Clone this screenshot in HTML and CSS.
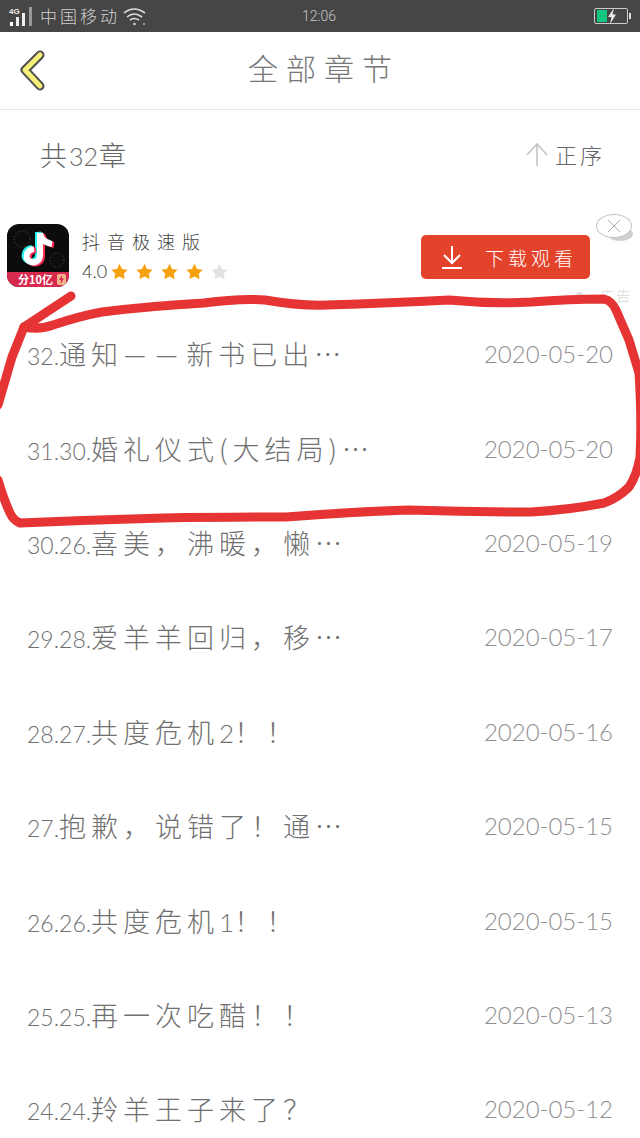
FILE: index.html
```html
<!DOCTYPE html>
<html lang="zh">

<head>
    <meta charset="UTF-8">
    <title>全部章节</title>
    <link rel="stylesheet" href="styles.css">
</head>

<body>
    <div class="page">
        <div class="status">
            <div class="status-left">
                <span class="net">4G</span>
                <svg class="signal" width="30" height="22" viewBox="0 0 30 22">
                    <rect x="0" y="17" width="3" height="4" fill="#fff" />
                    <rect x="6" y="12" width="3" height="9" fill="#eee" />
                    <rect x="12" y="8" width="3" height="13" fill="#eee" />
                    <rect x="19" y="2" width="3" height="19" fill="#999" />
                </svg>
                <span class="carrier">中国移动</span>
                <svg class="wifi" width="24" height="20" viewBox="0 0 24 20" fill="none" stroke="#ddd" stroke-width="1.6">
                    <path d="M1 7Q11 -1 22 7" />
                    <path d="M4 11Q11 5 19 11" />
                    <path d="M7 14Q11 11 16 14" />
                    <circle cx="11.5" cy="18" r="1.2" fill="#ddd" stroke="none" />
                    <circle cx="21" cy="18" r="1" fill="#bbb" stroke="none" />
                </svg>
            </div>
            <span class="clock">12:06</span>
            <div class="battery">
                <span class="battery-level"></span>
                <svg class="bolt" width="10" height="16" viewBox="0 0 10 16">
                    <path d="M7 0L1 9H4.500L3 16L9 6.500H5.500Z" fill="#eee" />
                </svg>
            </div>
        </div>

        <header class="top">
            <svg class="back" width="34" height="50" viewBox="0 0 34 50" fill="none" stroke-linecap="round" stroke-linejoin="round">
                <path d="M25 10L10 25L25 41" stroke="#4f4f4f" stroke-width="9" />
                <path d="M25 10L10 25L25 41" stroke="#f6f07a" stroke-width="5" />
            </svg>
            <h1>全部章节</h1>
        </header>

        <div class="sub">
            <span class="total">共<span class="num">32</span>章</span>
            <span class="order">
                <svg width="22" height="24" viewBox="0 0 22 24" fill="none" stroke="#c4c4c4" stroke-width="1.6">
                    <path d="M11 2V24M1 13L11 2L21 13" />
                </svg>
                正序
            </span>
        </div>

        <div class="ad">
            <div class="ad-icon">
                <svg width="62" height="48" viewBox="0 0 62 48" fill="none" stroke-width="6">
                    <circle cx="15" cy="15" r="8" stroke="#5a5a3a" stroke-width="1" stroke-dasharray="1 2" />
                    <circle cx="50" cy="36" r="7" stroke="#5a5a3a" stroke-width="1" stroke-dasharray="1 2" />
                    <path d="M33 9V31C33 38 26 40 22 37C18 34 19 26 27 25" stroke="#25f4ee" transform="translate(-2 -1)" />
                    <path d="M33 9C34 15 38 19 45 20" stroke="#fe2c55" transform="translate(2 1)" />
                    <path d="M33 9V31C33 38 26 40 22 37C18 34 19 26 27 25" stroke="#fe2c55" transform="translate(2 1)" />
                    <path d="M33 9C34 15 38 19 45 20" stroke="#25f4ee" transform="translate(-2 -1)" />
                    <path d="M33 9V31C33 38 26 40 22 37C18 34 19 26 27 25M33 9C34 15 38 19 45 20" stroke="#fff" />
                </svg>
                <span class="ad-badge">分10亿</span>
                <svg class="ad-flash" width="9" height="11" viewBox="0 0 9 11">
                    <rect width="9" height="11" rx="2" fill="#f2b48c" />
                    <path d="M5 1L2 6H4L3.500 10L7 4.500H5Z" fill="#d8294f" />
                </svg>
            </div>
            <div class="ad-info">
                <div class="ad-name">抖音极速版</div>
                <div class="ad-rate">
                    <span class="score">4.0</span>
                    <svg class="star" viewBox="0 0 20 20"><path d="M10 1L13 7L19.500 8L15 12.500L16 19L10 16L4 19L5 12.500L.5 8L7 7Z" /></svg>
                    <svg class="star" viewBox="0 0 20 20"><path d="M10 1L13 7L19.500 8L15 12.500L16 19L10 16L4 19L5 12.500L.5 8L7 7Z" /></svg>
                    <svg class="star" viewBox="0 0 20 20"><path d="M10 1L13 7L19.500 8L15 12.500L16 19L10 16L4 19L5 12.500L.5 8L7 7Z" /></svg>
                    <svg class="star" viewBox="0 0 20 20"><path d="M10 1L13 7L19.500 8L15 12.500L16 19L10 16L4 19L5 12.500L.5 8L7 7Z" /></svg>
                    <svg class="star off" viewBox="0 0 20 20"><path d="M10 1L13 7L19.500 8L15 12.500L16 19L10 16L4 19L5 12.500L.5 8L7 7Z" /></svg>
                </div>
            </div>
            <div class="ad-btn">
                <svg width="22" height="24" viewBox="0 0 22 24" fill="none" stroke="#fff" stroke-width="2">
                    <path d="M11 1V17M3 10L11 18L19 10M1 23H21" />
                </svg>
                <span>下载观看</span>
            </div>
            <div class="ad-close">
                <svg width="14" height="14" viewBox="0 0 14 14" stroke="#aaa" stroke-width="1">
                    <path d="M1 1L13 13M13 1L1 13" />
                </svg>
            </div>
            <span class="ad-dot"></span>
            <div class="ad-tag">广告</div>
        </div>

        <ul class="chapters">
            <li><span class="title"><span class="num">32.</span>通知<span class="dash">——</span>新书已出…</span><span class="date">2020-05-20</span></li>
            <li><span class="title"><span class="num">31.30.</span>婚礼仪式(大结局)…</span><span class="date">2020-05-20</span></li>
            <li><span class="title"><span class="num">30.26.</span>喜美，沸暖，懒…</span><span class="date">2020-05-19</span></li>
            <li><span class="title"><span class="num">29.28.</span>爱羊羊回归，移…</span><span class="date">2020-05-17</span></li>
            <li><span class="title"><span class="num">28.27.</span>共度危机<span class="digit">2</span>！！</span><span class="date">2020-05-16</span></li>
            <li><span class="title"><span class="num">27.</span>抱歉，说错了！通…</span><span class="date">2020-05-15</span></li>
            <li><span class="title"><span class="num">26.26.</span>共度危机<span class="digit">1</span>！！</span><span class="date">2020-05-15</span></li>
            <li><span class="title"><span class="num">25.25.</span>再一次吃醋！！</span><span class="date">2020-05-13</span></li>
            <li><span class="title"><span class="num">24.24.</span>羚羊王子来了？</span><span class="date">2020-05-12</span></li>
        </ul>

        <!-- red marker scribble on top of the screenshot -->
        <svg class="scribble" width="640" height="1138" viewBox="0 0 640 1138" fill="none" stroke="#e63333" stroke-width="9" stroke-linecap="round" stroke-linejoin="round">
            <path d="M71 296L24 327Q40 330 53 325Q80 316 102 312Q150 306 204 303Q240 298 265 300Q300 306 327 305Q390 303 449 300Q490 304 531 302Q570 299 604 299Q612 301 616 310L629 340L639 373Q642 420 640 457Q637 475 629 487Q618 498 604 503Q570 510 531 512Q470 512 408 510Q350 512 286 517Q220 517 163 518Q90 520 20 523Q13 520 10 513Q4 500 -2 480" />
            <path d="M24 327L12 357L-2 405" />
        </svg>
    </div>
</body>

</html>
```

FILE: styles.css
```css
* {
    box-sizing: border-box;
}

html,
body {
    margin: 0;
    padding: 0;
}

body {
    font-family: "Noto Sans CJK SC", sans-serif;
    font-weight: 300;
    background-color: #ffffff;
}

.page {
    position: relative;
    width: 640px;
    height: 1138px;
    overflow: hidden;
}

.status {
    display: flex;
    align-items: center;
    justify-content: space-between;
    height: 32px;
    padding: 0 10px;
    background-color: #464646;
    color: #cfcfcf;
}

.status-left {
    display: flex;
    align-items: center;
    width: 210px;
}

.net {
    position: absolute;
    left: 9px;
    top: 7px;
    font-family: "Liberation Sans", sans-serif;
    font-size: 8px;
    font-weight: 700;
    color: #eeeeee;
}

.carrier {
    font-size: 17px;
    letter-spacing: 3px;
    line-height: 32px;
}

.wifi {
    margin-left: 3px;
}

.clock {
    font-family: "Roboto", sans-serif;
    font-size: 14px;
    color: #c8c8c8;
    margin-right: 176px;
}

.battery {
    display: flex;
    align-items: center;
    position: relative;
    width: 34px;
    height: 16px;
    margin-right: 2px;
    padding: 1px 2px;
    border: 1px solid #cccccc;
    border-radius: 2px;
}

.battery::after {
    content: "";
    position: absolute;
    right: -4px;
    top: 4px;
    width: 2px;
    height: 6px;
    background-color: #dddddd;
}

.battery-level {
    width: 10px;
    height: 12px;
    background-color: #12c77f;
}

.top {
    display: flex;
    align-items: center;
    justify-content: center;
    position: relative;
    height: 78px;
    border-bottom: 1px solid #e6e6e6;
}

.back {
    position: absolute;
    left: 15px;
    top: 13px;
}

.top h1 {
    margin: 0 0 8px 8px;
    font-size: 30px;
    font-weight: 300;
    letter-spacing: 8px;
    color: #777777;
}

.sub {
    display: flex;
    align-items: center;
    justify-content: space-between;
    height: 92px;
    padding: 0 35px 4px 40px;
    color: #666666;
}

.total {
    font-size: 27px;
    letter-spacing: 1px;
}

.total .num {
    margin: 0 1px;
    font-size: 25px;
}

.order {
    display: flex;
    align-items: center;
    gap: 7px;
    font-size: 22px;
    letter-spacing: 3px;
}

.ad {
    display: flex;
    position: relative;
    height: 106px;
    padding: 22px 0 0 7px;
}

.ad-icon {
    position: relative;
    width: 62px;
    height: 63px;
    overflow: hidden;
    border-radius: 12px;
    background-color: #0c0c0c;
}

.ad-icon svg {
    display: block;
}

.ad-badge {
    position: absolute;
    left: 0;
    right: 0;
    bottom: 0;
    height: 15px;
    padding-left: 11px;
    background-color: #d8294f;
    color: #ffffff;
    font-size: 11px;
    font-weight: 700;
    line-height: 15px;
}

.ad-icon .ad-flash {
    position: absolute;
    right: 3px;
    bottom: 2px;
}

.ad-info {
    width: 352px;
    padding: 3px 0 0 13px;
}

.ad-name {
    font-size: 18px;
    letter-spacing: 7px;
    line-height: 28px;
    color: #444444;
}

.ad-rate {
    display: flex;
    align-items: center;
    margin-top: 5px;
}

.score {
    width: 29px;
    font-family: "Lato", sans-serif;
    font-size: 18px;
    font-weight: 300;
    color: #333333;
}

.star {
    width: 17px;
    height: 17px;
    margin-right: 8px;
    fill: #f7a10f;
}

.star.off {
    fill: #e2e2e2;
}

.ad-btn {
    display: flex;
    align-items: center;
    gap: 22px;
    width: 169px;
    height: 44px;
    margin-top: 11px;
    padding-left: 20px;
    border-radius: 5px;
    background-color: #e4432b;
    color: #ffffff;
    font-size: 19px;
    letter-spacing: 4px;
}

.ad-close {
    display: flex;
    align-items: center;
    justify-content: center;
    position: absolute;
    left: 596px;
    top: 12px;
    width: 36px;
    height: 24px;
    border: 1px solid #c4c4c4;
    border-radius: 50%;
    background-color: #ffffff;
    box-shadow: 6px 8px 0 -5px #cfcfcf;
}

.ad-dot {
    position: absolute;
    left: 576px;
    top: 90px;
    width: 7px;
    height: 7px;
    border-radius: 50%;
    background-color: #dddddd;
}

.ad-tag {
    position: absolute;
    left: 600px;
    top: 83px;
    font-size: 14px;
    letter-spacing: 2px;
    color: #d8d8d8;
}

.chapters {
    margin: 0;
    padding: 0;
    list-style: none;
}

.chapters li {
    display: flex;
    align-items: center;
    justify-content: space-between;
    height: 94.4px;
    padding: 0 27px 3px;
}

.title {
    font-size: 27px;
    letter-spacing: 5px;
    color: #707070;
    white-space: nowrap;
}

.num {
    font-family: "Lato", sans-serif;
    font-size: 23px;
    font-weight: 300;
    letter-spacing: 0;
}

.digit {
    font-family: "Lato", sans-serif;
    font-size: 26px;
    font-weight: 300;
    letter-spacing: 0;
}

.dash {
    font-family: "Lato", sans-serif;
    font-size: 30px;
    letter-spacing: 8px;
}

.date {
    font-family: "Lato", sans-serif;
    font-size: 24px;
    font-weight: 300;
    color: #8f8f8f;
}

.scribble {
    position: absolute;
    left: 0;
    top: 0;
    pointer-events: none;
}
```
